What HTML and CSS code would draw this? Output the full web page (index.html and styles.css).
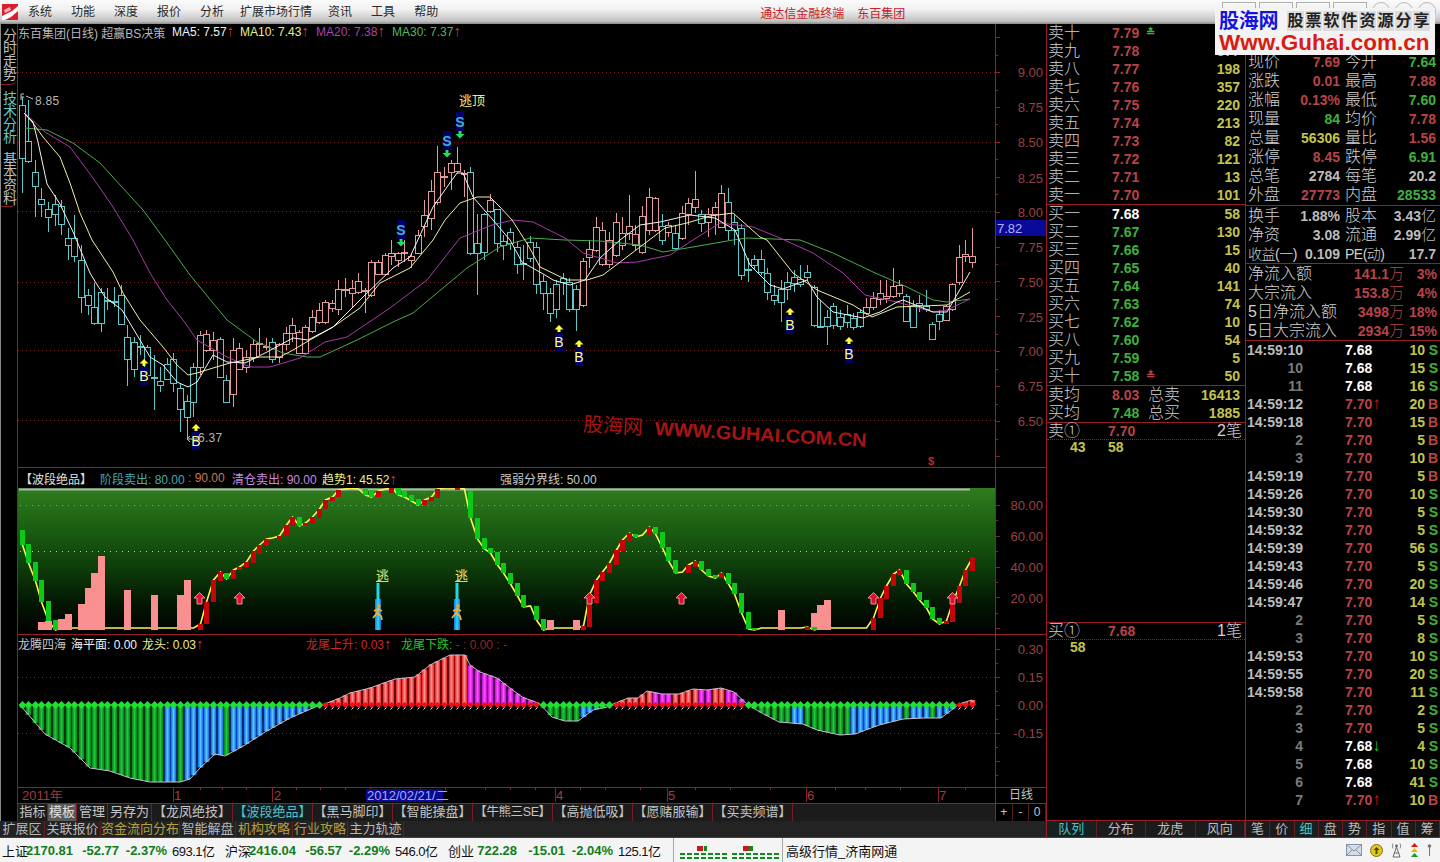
FILE: index.html
```html
<!DOCTYPE html>
<html lang="zh">
<head>
<meta charset="utf-8">
<title>通达信金融终端 东百集团</title>
<link rel="stylesheet" href="styles.css">
</head>
<body>
<div class="app">
  <header class="menubar">
    <svg class="logo" viewBox="0 0 16 16" width="16" height="16"><rect width="16" height="16" fill="#d8202c"/><path d="M0 12 L10 7 L16 2 L16 7 L9 13 L3 16 L0 16Z" fill="#fff"/><path d="M2 6 L8 3 L9 6 L3 9Z" fill="#f4b0b0"/></svg>
    <nav class="menu">
      <span>系统</span><span>功能</span><span>深度</span><span>报价</span><span>分析</span><span class="wide">扩展市场行情</span><span>资讯</span><span>工具</span><span>帮助</span>
    </nav>
    <div class="menu-title"><span>通达信金融终端</span><span>东百集团</span></div>
    <div class="winbtns"><i></i><i></i><i></i><i></i><b></b><b></b><b></b></div>
  </header>

  <main class="body">
    <section class="left">
      <div class="left-top">
        <aside class="side">
          <div class="side-tab h1">分时走势</div>
          <div class="side-tab h2 on">技术分析</div>
          <div class="side-tab h3">基本资料</div>
        </aside>
        <div class="charts">
          <div class="panel p-main">
            <div class="plot">
              <div class="head h-main">
                <span class="name">东百集团(日线) 超赢BS决策</span>
                <span class="ma w68 c-white">MA5: 7.57<em>↑</em></span>
                <span class="ma w76 c-yellow">MA10: 7.43<em>↑</em></span>
                <span class="ma w76 c-mag">MA20: 7.38<em>↑</em></span>
                <span class="ma c-green">MA30: 7.37<em>↑</em></span>
              </div>
              <svg id="mainChart" class="svg" width="977" height="427" viewBox="18 40 977 427"></svg>
            </div>
            <svg id="axisMain" class="svg" width="51" height="443" viewBox="995 24 51 443"></svg>
          </div>
          <div class="panel p-ind">
            <div class="plot">
              <div class="head h-ind">
                <span class="i-name">【波段绝品】</span>
                <span class="i1 c-teal">阶段卖出: 80.00</span>
                <span class="i2 c-org">: 90.00</span>
                <span class="i3 c-lil">清仓卖出: 90.00</span>
                <span class="i4 c-yellow">趋势1: 45.52<em>↑</em></span>
                <span class="i5 c-gray">强弱分界线: 50.00</span>
              </div>
              <svg id="indChart" class="svg" width="977" height="146" viewBox="18 488 977 146"></svg>
            </div>
            <svg id="axisInd" class="svg" width="51" height="166" viewBox="995 468 51 166"></svg>
          </div>
          <div class="panel p-drg">
            <div class="plot">
              <div class="head h-drg">
                <span class="d1 c-gray">龙腾四海</span>
                <span class="d2 c-white">海平面: 0.00</span>
                <span class="d3 c-yellow">龙头: 0.03<em>↑</em></span>
                <span class="d4 c-red">龙尾上升: 0.03<em>↑</em></span>
                <span class="d5 c-lime">龙尾下跌: <u>- : 0.00 : -</u></span>
              </div>
              <svg id="drgChart" class="svg" width="977" height="136" viewBox="18 651 977 136"></svg>
            </div>
            <svg id="axisDrg" class="svg" width="51" height="152" viewBox="995 635 51 152"></svg>
          </div>
          <div class="xaxis">
            <svg id="xAxis" class="svg" width="977" height="15" viewBox="18 788 977 15"></svg>
            <div class="period">日线</div>
          </div>
          <div class="tpl-row">
            <span>指标</span><span class="sel">模板</span><span>管理</span><span>另存为</span>
            <span>【龙凤绝技】</span><span class="active">【波段绝品】</span><span>【黑马脚印】</span><span>【智能操盘】</span><span class="narrow">【牛熊三SE】</span><span>【高抛低吸】</span><span>【愿赌服输】</span><span>【买卖频谱】</span>
            <div class="zoom"><b>+</b><b>-</b><b>0</b></div>
          </div>
        </div>
      </div>
      <div class="ext-row">
        <span>扩展区</span><span>关联报价</span><span class="y">资金流向分布</span><span>智能解盘</span><span class="y">机构攻略</span><span class="y">行业攻略</span><span>主力轨迹</span>
      </div>
    </section>

    <section class="quote">
      <div class="book">
        <div class="bk"><span class="l">卖十</span><b class="r">7.79</b><i class="g">≛</i><b class="y"></b></div>
        <div class="bk"><span class="l">卖九</span><b class="r">7.78</b><i></i><b class="y">377</b></div>
        <div class="bk"><span class="l">卖八</span><b class="r">7.77</b><i></i><b class="y">198</b></div>
        <div class="bk"><span class="l">卖七</span><b class="r">7.76</b><i></i><b class="y">357</b></div>
        <div class="bk"><span class="l">卖六</span><b class="r">7.75</b><i></i><b class="y">220</b></div>
        <div class="bk"><span class="l">卖五</span><b class="r">7.74</b><i></i><b class="y">213</b></div>
        <div class="bk"><span class="l">卖四</span><b class="r">7.73</b><i></i><b class="y">82</b></div>
        <div class="bk"><span class="l">卖三</span><b class="r">7.72</b><i></i><b class="y">121</b></div>
        <div class="bk"><span class="l">卖二</span><b class="r">7.71</b><i></i><b class="y">13</b></div>
        <div class="bk"><span class="l">卖一</span><b class="r">7.70</b><i></i><b class="y">101</b></div>
        <div class="rule"></div>
        <div class="bk"><span class="l">买一</span><b class="w">7.68</b><i></i><b class="y">58</b></div>
        <div class="bk"><span class="l">买二</span><b class="g">7.67</b><i></i><b class="y">130</b></div>
        <div class="bk"><span class="l">买三</span><b class="g">7.66</b><i></i><b class="y">15</b></div>
        <div class="bk"><span class="l">买四</span><b class="g">7.65</b><i></i><b class="y">40</b></div>
        <div class="bk"><span class="l">买五</span><b class="g">7.64</b><i></i><b class="y">141</b></div>
        <div class="bk"><span class="l">买六</span><b class="g">7.63</b><i></i><b class="y">74</b></div>
        <div class="bk"><span class="l">买七</span><b class="g">7.62</b><i></i><b class="y">10</b></div>
        <div class="bk"><span class="l">买八</span><b class="g">7.60</b><i></i><b class="y">54</b></div>
        <div class="bk"><span class="l">买九</span><b class="g">7.59</b><i></i><b class="y">5</b></div>
        <div class="bk"><span class="l">买十</span><b class="g">7.58</b><i class="r">≛</i><b class="y">50</b></div>
        <div class="rule"></div>
        <div class="avg"><span class="l">卖均</span><b class="r">8.03</b><span class="l">总卖</span><b class="y">16413</b></div>
        <div class="avg"><span class="l">买均</span><b class="g">7.48</b><span class="l">总买</span><b class="y">1885</b></div>
        <div class="rule"></div>
        <div class="q-head"><span class="l">卖①</span><b class="r">7.70</b><span class="l n">2笔</span></div>
        <div class="q-list"><b class="y">43</b><b class="y">58</b></div>
        <div class="rule gap"></div>
        <div class="q-head"><span class="l">买①</span><b class="r">7.68</b><span class="l n">1笔</span></div>
        <div class="q-list"><b class="y">58</b></div>
        <div class="tabs t-book"><span class="on">队列</span><span>分布</span><span>龙虎</span><span>风向</span></div>
      </div>
      <div class="info">
        <div class="stats s1">
          <div class="st"><span class="l">现价</span><b class="r">7.69</b><span class="l">今开</span><b class="g">7.64</b></div>
          <div class="st"><span class="l">涨跌</span><b class="r">0.01</b><span class="l">最高</span><b class="r">7.88</b></div>
          <div class="st"><span class="l">涨幅</span><b class="r">0.13%</b><span class="l">最低</span><b class="g">7.60</b></div>
          <div class="st"><span class="l">现量</span><b class="g">84</b><span class="l">均价</span><b class="r">7.78</b></div>
          <div class="st"><span class="l">总量</span><b class="y">56306</b><span class="l">量比</span><b class="r">1.56</b></div>
          <div class="st"><span class="l">涨停</span><b class="r">8.45</b><span class="l">跌停</span><b class="g">6.91</b></div>
          <div class="st"><span class="l">总笔</span><b class="s">2784</b><span class="l">每笔</span><b class="s">20.2</b></div>
          <div class="st"><span class="l">外盘</span><b class="r">27773</b><span class="l">内盘</span><b class="g">28533</b></div>
        </div>
        <div class="rule"></div>
        <div class="stats s2">
          <div class="st"><span class="l">换手</span><b class="s">1.88%</b><span class="l">股本</span><b class="s">3.43<span class="cj">亿</span></b></div>
          <div class="st"><span class="l">净资</span><b class="s">3.08</b><span class="l">流通</span><b class="s">2.99<span class="cj">亿</span></b></div>
          <div class="st"><span class="l tight">收益(一)</span><b class="s">0.109</b><span class="l tight">PE(动)</span><b class="s">17.7</b></div>
        </div>
        <div class="rule"></div>
        <div class="flows">
          <div class="fl"><span class="l">净流入额</span><b class="r">141.1<span class="cj">万</span></b><b class="r">3%</b></div>
          <div class="fl"><span class="l">大宗流入</span><b class="r">153.8<span class="cj">万</span></b><b class="r">4%</b></div>
          <div class="fl"><span class="l">5日净流入额</span><b class="r">3498<span class="cj">万</span></b><b class="r">18%</b></div>
          <div class="fl"><span class="l">5日大宗流入</span><b class="r">2934<span class="cj">万</span></b><b class="r">15%</b></div>
        </div>
        <div class="rule"></div>
        <div class="ticks">
          <div class="tk"><b class="s">14:59:10</b><b class="w">7.68</b><b class="y">10</b><b class="g">S</b></div>
          <div class="tk"><b class="d">10</b><b class="w">7.68</b><b class="y">15</b><b class="g">S</b></div>
          <div class="tk"><b class="d">11</b><b class="w">7.68</b><b class="y">16</b><b class="g">S</b></div>
          <div class="tk"><b class="s">14:59:12</b><b class="r">7.70<i class="up">↑</i></b><b class="y">20</b><b class="r">B</b></div>
          <div class="tk"><b class="s">14:59:18</b><b class="r">7.70</b><b class="y">15</b><b class="r">B</b></div>
          <div class="tk"><b class="d">2</b><b class="r">7.70</b><b class="y">5</b><b class="r">B</b></div>
          <div class="tk"><b class="d">3</b><b class="r">7.70</b><b class="y">10</b><b class="r">B</b></div>
          <div class="tk"><b class="s">14:59:19</b><b class="r">7.70</b><b class="y">5</b><b class="r">B</b></div>
          <div class="tk"><b class="s">14:59:26</b><b class="r">7.70</b><b class="y">10</b><b class="g">S</b></div>
          <div class="tk"><b class="s">14:59:30</b><b class="r">7.70</b><b class="y">5</b><b class="g">S</b></div>
          <div class="tk"><b class="s">14:59:32</b><b class="r">7.70</b><b class="y">5</b><b class="g">S</b></div>
          <div class="tk"><b class="s">14:59:39</b><b class="r">7.70</b><b class="y">56</b><b class="g">S</b></div>
          <div class="tk"><b class="s">14:59:43</b><b class="r">7.70</b><b class="y">5</b><b class="g">S</b></div>
          <div class="tk"><b class="s">14:59:46</b><b class="r">7.70</b><b class="y">20</b><b class="g">S</b></div>
          <div class="tk"><b class="s">14:59:47</b><b class="r">7.70</b><b class="y">14</b><b class="g">S</b></div>
          <div class="tk"><b class="d">2</b><b class="r">7.70</b><b class="y">5</b><b class="g">S</b></div>
          <div class="tk"><b class="d">3</b><b class="r">7.70</b><b class="y">8</b><b class="g">S</b></div>
          <div class="tk"><b class="s">14:59:53</b><b class="r">7.70</b><b class="y">10</b><b class="g">S</b></div>
          <div class="tk"><b class="s">14:59:55</b><b class="r">7.70</b><b class="y">20</b><b class="g">S</b></div>
          <div class="tk"><b class="s">14:59:58</b><b class="r">7.70</b><b class="y">11</b><b class="g">S</b></div>
          <div class="tk"><b class="d">2</b><b class="r">7.70</b><b class="y">2</b><b class="g">S</b></div>
          <div class="tk"><b class="d">3</b><b class="r">7.70</b><b class="y">5</b><b class="g">S</b></div>
          <div class="tk"><b class="d">4</b><b class="w">7.68<i class="dn">↓</i></b><b class="y">4</b><b class="g">S</b></div>
          <div class="tk"><b class="d">5</b><b class="w">7.68</b><b class="y">10</b><b class="g">S</b></div>
          <div class="tk"><b class="d">6</b><b class="w">7.68</b><b class="y">41</b><b class="g">S</b></div>
          <div class="tk"><b class="d">7</b><b class="r">7.70<i class="up">↑</i></b><b class="y">10</b><b class="r">B</b></div>
        </div>
        <div class="tabs t-info"><span>笔</span><span>价</span><span class="on">细</span><span>盘</span><span>势</span><span>指</span><span>值</span><span>筹</span></div>
      </div>
    </section>
  </main>

  <footer class="status">
    <div class="idx"><span>上证</span><b>2170.81</b><b>-52.77</b><b>-2.37%</b><span class="amt">693.1亿</span></div>
    <div class="idx"><span>沪深</span><b>2416.04</b><b>-56.57</b><b>-2.29%</b><span class="amt">546.0亿</span></div>
    <div class="idx"><span>创业</span><b>722.28</b><b>-15.01</b><b>-2.04%</b><span class="amt">125.1亿</span></div>
    <div class="mini">
      <svg width="104" height="22" viewBox="0 0 104 22"><g fill="#0e8a1e"><path d="M2 13h5v2H2zM9 13h5v2H9zM16 13h5v2h-5zM23 13h5v2h-5zM30 13h5v2h-5zM37 13h5v2h-5zM44 13h5v2h-5zM54 13h5v2h-5zM61 13h5v2h-5zM68 13h5v2h-5zM75 13h5v2h-5zM82 13h5v2h-5zM89 13h5v2h-5zM96 13h5v2h-5zM2 17h5v2H2zM9 17h5v2H9zM16 17h5v2h-5zM23 17h5v2h-5zM30 17h5v2h-5zM37 17h5v2h-5zM44 17h5v2h-5zM54 17h5v2h-5zM61 17h5v2h-5zM68 17h5v2h-5zM75 17h5v2h-5zM82 17h5v2h-5zM89 17h5v2h-5zM96 17h5v2h-5zM26 6h3v5h-3zM70 6h5v5h-5z"/></g><g fill="#c81818"><path d="M19 6h6v5h-6zM72 6h-7v5h5z"/></g></svg>
    </div>
    <div class="feed">高级行情_济南网通</div>
    <div class="tray">
      <svg width="16" height="12" viewBox="0 0 16 12"><rect x=".5" y=".5" width="15" height="11" fill="#d4dce8" stroke="#8494a8"/><path d="M1 1l7 6 7-6M1 11l5-5M15 11l-5-5" fill="none" stroke="#8494a8"/></svg>
      <svg width="13" height="13" viewBox="0 0 13 13"><circle cx="6.5" cy="6.5" r="6" fill="#e0c820" stroke="#807010"/><path d="M6.5 3l3 3h-2v4h-2V6h-2z" fill="#504808"/></svg>
      <svg width="11" height="16" viewBox="0 0 11 16"><path d="M5.5 5L2 15M5.5 5l3.500 10M3 11h5M2 15h7" stroke="#666" fill="none"/><circle cx="5.5" cy="4" r="1.400" fill="#666"/><path d="M2 1.500a5 5 0 0 0 0 5M9 1.500a5 5 0 0 1 0 5" stroke="#888" fill="none"/></svg>
      <svg width="9" height="15" viewBox="0 0 9 15"><path d="M4.500 0L8 4H1z" fill="#e01010"/><path d="M4.500 5L8 9H1z" fill="#e0c000"/><path d="M4.500 10L8 14H1z" fill="#10a010"/></svg>
      <svg width="5" height="13" viewBox="0 0 5 13"><circle cx="2.500" cy="2" r="1.800" fill="#777"/><path d="M2.500 3v9" stroke="#777"/></svg>
    </div>
  </footer>

  <aside class="ad">
    <div class="ad-top"><strong>股海网</strong><div class="ad-cells"><span>股</span><span>票</span><span>软</span><span>件</span><span>资</span><span>源</span><span>分</span><span>享</span></div></div>
    <div class="ad-url">Www.Guhai.com.cn</div>
  </aside>
</div>
<script src="script.js"></script>
</body>
</html>
```

FILE: styles.css
```css
* { box-sizing: border-box; }
html, body { margin: 0; padding: 0; background: #000; }
body { font-family: "Liberation Sans", "Noto Sans CJK SC", sans-serif; overflow: hidden; }
.app { position: relative; width: 1440px; height: 862px; display: flex; flex-direction: column; background: #000; }
.svg { display: block; flex: none; }
em { font-style: normal; color: #c83a3a; font-size: 15px; line-height: 12px; }

/* menu */
.menubar { height: 24px; flex: none; display: flex; align-items: center; background: linear-gradient(#fbfbfb, #f0f0f0 40%, #c2c2c2 88%, #8a8a8a); position: relative; }
.logo { margin-left: 2px; }
.menu { display: flex; gap: 19px; margin-left: 10px; font-size: 12px; color: #2a2a2a; line-height: 22px; }
.menu .wide { margin: 0 -3px; }
.menu-title { display: flex; gap: 13px; margin-left: 322px; font-size: 12px; color: #c82028; }
.winbtns { position: absolute; left: 1222px; top: 2px; display: flex; gap: 3px; }
.winbtns i { width: 34px; height: 14px; border: 1px solid #b0b0b0; }
.winbtns b { width: 18px; height: 18px; border: 1px solid #b8b8b8; border-radius: 50%; margin-left: 2px; }

/* layout */
.body { flex: none; height: 814px; display: flex; }
.left { width: 1046px; flex: none; display: flex; flex-direction: column; }
.left-top { display: flex; height: 797px; }
.side { width: 18px; flex: none; border-left: 1px solid #8a8a8a; border-right: 1px solid #8e1c24; }
.side-tab { width: 16px; writing-mode: vertical-rl; font-size: 14px; line-height: 16px; letter-spacing: -1px; color: #bdbdbd; display: flex; align-items: center; justify-content: center; border-bottom: 1px solid #8e1c24; border-radius: 0 0 6px 0; }
.side-tab.h1 { height: 61px; margin-bottom: 4px; }
.side-tab.h2 { height: 57px; color: #62c8c8; margin-bottom: 3px; border-bottom-color: transparent; }
.side-tab.h3 { height: 58px; }
.charts { width: 1028px; flex: none; display: flex; flex-direction: column; }
.panel { display: flex; border-bottom: 1px solid #9a1c26; flex: none; }
.p-main { height: 444px; }
.p-ind { height: 167px; }
.p-drg { height: 153px; }
.plot { width: 977px; flex: none; display: flex; flex-direction: column; }

/* chart heads */
.head { display: flex; font-size: 12px; white-space: nowrap; align-items: center; }
.h-main { height: 16px; padding-left: 0; }
.h-ind { height: 20px; padding-left: 2px; }
.h-drg { height: 16px; }
.name { width: 154px; color: #b8b8b8; }
.ma.w68 { width: 68px; }
.ma.w76 { width: 76px; }
.c-white { color: #f2f2f2; }
.c-yellow { color: #eeee88; }
.c-mag { color: #b040b0; }
.c-green { color: #50b860; }
.c-teal { color: #48a8b0; }
.c-org { color: #c87858; }
.c-lil { color: #c888e0; }
.c-gray { color: #c8c8c8; }
.c-red { color: #c82828; }
.c-lime { color: #28c828; }
.c-lime u { text-decoration: none; color: #902828; }
.i-name { width: 80px; color: #e0e0e0; }
.i1 { width: 88px; }
.i2 { width: 44px; }
.i3 { width: 90px; }
.i4 { width: 178px; }
.d1 { width: 53px; }
.d2 { width: 71px; }
.d3 { width: 164px; }
.d4 { width: 95px; }

/* x axis + template tabs */
.xaxis { display: flex; height: 16px; flex: none; border-bottom: 1px solid #9a1c26; }
.period { width: 51px; color: #c4c4c4; font-size: 12px; text-align: center; line-height: 15px; border-left: 1px solid #9a1c26; }
.tpl-row { height: 17px; flex: none; display: grid; grid-template-columns: 30px 29px 31px 44px 81px 80px 80px 80px 80px 80px 80px 80px 202px 51px; background: #1b1b1b; font-size: 13px; line-height: 16px; color: #c4c4c4; }
.tpl-row > span { text-align: center; border-right: 1px solid #7a1c22; white-space: nowrap; }
.tpl-row .sel { background: #5a5a5a; color: #e0e0e0; }
.tpl-row .active { color: #52c0c8; background: #141f22; }
.tpl-row .narrow { letter-spacing: -.4px; font-size: 12.5px; }
.zoom { grid-column: 14; display: grid; grid-template-columns: repeat(3, 1fr); background: #000; font-size: 12px; border-left: 1px solid #9a1c26; }
.zoom b { font-weight: 400; text-align: center; border-right: 1px solid #5a1c1c; }
.ext-row { height: 17px; flex: none; display: grid; grid-template-columns: 45px 56px 79px 56px 57px 55px 56px 1fr; grid-auto-flow: column; background: #232323; font-size: 13px; line-height: 16px; color: #b8b8b8; border-bottom: 1px solid #8e1c24; }
.ext-row span { text-align: center; border-right: 1px solid #6a1c20; white-space: nowrap; }
.ext-row .y { color: #b4a040; }

/* quote panel */
.quote { width: 394px; flex: none; display: flex; border-bottom: 1px solid #8e1c24; }
.book { width: 200px; border-left: 1px solid #9a1c26; border-right: 1px solid #9a1c26; display: flex; flex-direction: column; flex: none; height: 813px; }
.info { width: 194px; flex: none; display: flex; flex-direction: column; height: 813px; }
.l { font-size: 16px; font-weight: 300; color: #d0d0d0; white-space: nowrap; line-height: 18px; }
.l.tight { font-size: 14px; letter-spacing: -.5px; }
.book b, .info b { font-size: 14px; font-weight: 700; line-height: 18px; white-space: nowrap; }
.r { color: #b8434a; }
.g { color: #3eb13e; }
.y { color: #c4c44c; }
.w { color: #fff; }
.s { color: #bcbcbc; }
.d { color: #7c7c7c; }
i { font-style: normal; }
.cj { font-weight: 300; font-size: 15px; }
.bk { height: 18px; display: grid; grid-template-columns: 64px 34px 18px 1fr; padding: 0 5px 0 1px; }
.bk > b:last-child, .avg > b:last-child { text-align: right; }
.bk > i { font-size: 11px; line-height: 17px; font-weight: 700; }
.rule { height: 1px; flex: none; background: #9a1c26; }
.rule.gap { margin-top: 166px; }
.avg { height: 18px; display: grid; grid-template-columns: 64px 36px 36px 1fr; padding: 0 5px 0 1px; }
.q-head { height: 17px; display: grid; grid-template-columns: 60px 1fr auto; padding: 0 3px 0 1px; border-bottom: 1px dotted #703030; }
.q-head .l, .q-head b { line-height: 16px; }
.q-list { height: 16px; display: grid; grid-template-columns: 38px 38px; padding-left: 23px; }
.q-list b { line-height: 15px; }
.tabs { margin-top: auto; height: 17px; flex: none; display: grid; background: #1b1b1b; font-size: 13px; line-height: 16px; color: #bcbcbc; text-align: center; border-top: 1px solid #9a1c26; }
.tabs span { border-right: 1px solid #6a1c20; }
.tabs .on { color: #50c0c0; background: #142022; }
.t-book { grid-template-columns: repeat(4, 1fr); }
.t-info { grid-template-columns: repeat(8, 1fr); }
.stats.s1 { padding-top: 29px; display: grid; grid-auto-rows: 18.9px; height: 181px; }
.stats.s2 { display: grid; grid-auto-rows: 19px; height: 57px; }
.st { display: grid; grid-template-columns: 34px 58px 38px 58px; padding-left: 2px; align-items: center; }
.st b { text-align: right; }
.st .l { padding-left: 5px; }
.st .l:first-child { padding-left: 0; }
.flows { display: grid; grid-auto-rows: 19px; height: 76px; }
.fl { display: grid; grid-template-columns: 100px 56px 33px; padding-left: 2px; align-items: center; }
.fl b { text-align: right; }
.ticks { display: grid; grid-auto-rows: 18px; }
.tk { display: grid; grid-template-columns: 57px 90px 32px 13px; }
.tk > b:nth-child(1) { text-align: right; }
.tk > b:nth-child(2) { padding-left: 42px; }
.tk > b:nth-child(3) { text-align: right; }
.tk > b:nth-child(4) { text-align: right; }
.up, .dn { font-size: 17px; line-height: 12px; }
.up { color: #e01010; }
.dn { color: #20c030; }

/* status bar */
.status { height: 24px; flex: none; display: flex; align-items: center; background: #f4f4f4; padding-left: 2px; font-size: 13px; color: #111; }
.idx { display: grid; grid-template-columns: 24px 45px 48px 48px 58px; flex: none; width: 223px; align-items: center; white-space: nowrap; }
.idx b { color: #0f7d20; text-align: right; font-size: 13px; }
.idx .amt { padding-left: 5px; font-size: 13px; letter-spacing: -.5px; }
.mini { margin-left: 2px; height: 24px; width: 110px; border-left: 1px solid #a8a8a8; border-right: 1px solid #a8a8a8; padding: 2px 0 0 4px; flex: none; }
.feed { padding-left: 3px; font-size: 13px; white-space: nowrap; }
.tray { margin-left: auto; display: flex; align-items: center; gap: 8px; padding-right: 8px; }

/* overlay ad */
.ad { position: absolute; left: 1215px; top: 8px; width: 220px; height: 47px; background: #f3f3f3; padding: 1px 4px; }
.ad-top { display: flex; align-items: center; height: 23px; }
.ad-top strong { font-size: 20px; line-height: 22px; color: #1414e0; width: 68px; letter-spacing: -.3px; }
.ad-cells { display: flex; }
.ad-cells span { width: 18px; height: 20px; text-align: center; font-size: 16px; line-height: 20px; color: #222; font-weight: 700; background: #dcdcdc; border-right: 1px solid #f3f3f3; }
.ad-url { font-size: 22.5px; line-height: 21px; font-weight: 700; color: #d81c10; white-space: nowrap; }

/* svg text */
.t-axis { font: 13px "Liberation Sans", sans-serif; fill: #9a4242; text-anchor: end; }
.t-x { font: 13px "Liberation Sans", sans-serif; fill: #a03c3c; }
.t-date { font: 13px "Liberation Sans", "Noto Sans CJK SC", sans-serif; fill: #a8a8ff; }
.t-val { font: 12px "Liberation Sans", sans-serif; fill: #b8b8b8; letter-spacing: .3px; }
.t-escape { font: 13px "Noto Sans CJK SC", sans-serif; fill: #ecec80; }
.t-s { font: 700 14px "Liberation Sans", sans-serif; fill: #3cb4c8; text-anchor: middle; }
.t-b { font: 14px "Liberation Sans", sans-serif; fill: #ffff80; text-anchor: middle; }
.t-mark { font: 700 11px "Liberation Sans", sans-serif; fill: #c02828; text-anchor: middle; }
.wm-cn { font: 20px "Noto Sans CJK SC", sans-serif; fill: #a81414; }
.wm-en { font: 700 19px "Liberation Sans", sans-serif; fill: #a81414; }
```

FILE: script.js
```js
// Chart data: every value is read off the screen in page pixels.
var X = function (i) { return Math.round(21.5 + 6.6 * i) + 0.5; };
var candles = ("g105,158,97,193 g141,161,100,163 g172,186,160,217 g199,204,188,217 g209,217,202,232 g204,214,195,226 g206,224,200,235 g238,245,228,260 g238,256,215,262 g260,297,245,313 " +
"g295,305,289,315 g307,323,283,325 g292,323,288,332 g300,301,288,310 g301,302,287,307 g295,324,285,325 g337,359,325,386 g342,369,337,377 g346,347,335,355 g347,375,345,378 " +
"g377,378,355,410 g381,385,367,392 g364,379,358,380 g359,383,353,392 g388,409,383,432 g401,417,395,440 g367,402,363,417 r335,367,331,375 r334,350,330,352 r340,350,332,360 " +
"g339,377,337,378 g380,402,375,403 r350,394,338,407 r348,369,343,370 r357,367,350,373 r344,357,340,362 r343,344,328,355 r346,347,338,350 g342,359,338,363 r344,357,343,363 " +
"r333,344,327,350 r325,333,318,342 r332,353,330,354 r327,353,325,354 r317,331,310,333 r310,322,303,324 r302,322,300,324 r303,308,300,312 r289,309,280,315 r289,290,278,297 " +
"r288,293,280,308 r281,292,273,294 r290,291,288,313 r262,295,260,297 r262,274,260,275 r255,274,253,275 r253,256,240,265 r253,260,252,267 r252,253,240,262 r256,260,253,268 " +
"r235,253,230,254 r215,226,200,237 r191,218,180,230 r172,202,146,205 r176,177,167,187 r163,172,160,190 r163,171,147,173 r173,174,170,197 g172,253,167,255 g243,253,214,295 " +
"g214,252,213,260 r200,211,194,213 g209,243,209,252 g241,245,235,260 g232,243,228,250 " +
"g247,264,241,274 g263,264,245,280 g242,258,236,262 g247,284,242,294 g281,293,275,310 g293,313,288,322 g284,309,280,318 g278,282,273,295 g282,309,278,312 g289,309,285,331 " +
"r261,305,258,307 r249,257,240,268 r227,250,217,252 r230,264,222,266 r240,264,232,268 r222,255,213,257 r233,245,217,250 r226,233,195,240 r234,245,225,250 r216,252,206,254 " +
"r197,230,188,235 r198,230,197,232 g226,240,214,245 r225,232,222,237 g233,248,225,250 r213,238,206,240 r203,214,198,225 r199,207,171,213 g214,223,210,232 r214,222,208,237 " +
"r207,214,202,235 r193,227,185,228 g202,230,188,240 g222,230,215,245 g228,275,224,280 g269,270,258,282 g259,265,255,270 g259,272,250,275 g273,292,268,300 g295,300,285,305 " +
"g289,302,280,322 g282,289,272,300 g277,283,270,292 g279,284,265,287 g272,277,265,280 g287,325,285,327 g326,327,300,328 g317,326,310,345 g306,325,303,329 g317,326,310,330 " +
"g314,322,305,328 g318,327,313,330 g312,326,310,328 r307,313,298,315 r298,307,292,310 r293,299,280,305 r296,298,280,303 r286,296,268,298 r285,293,280,297 g296,321,294,322 " +
"g305,327,300,328 g303,305,295,312 g306,309,290,312 g324,339,322,340 g314,321,310,330 r306,320,305,321 r284,309,283,311 r257,282,245,285 r254,256,240,262 r256,262,228,268").split(" ");

var lines = {
  "#f4f4f4": "24,113 33,122 38,142 47,184 60,204 74,234 90,273 96,283 105,297 122,310 140,340 150,357 163,365 177,382 188,387 197,382 213,355 227,362 245,363 267,352 293,338 308,340 333,327 363,297 393,268 410,257 433,207 447,187 457,173 463,173 473,197 493,220 510,240 522,262 545,275 553,280 570,285 585,280 600,258 620,240 640,225 660,222 690,215 715,218 735,230 750,265 770,285 783,289 807,280 817,297 833,312 863,318 880,312 897,302 903,300 933,312 947,312 970,272",
  "#f0f0a0": "24,113 33,123 43,137 60,157 70,183 80,213 92,240 113,272 123,293 140,320 163,347 177,365 188,375 197,373 213,368 230,363 260,357 280,357 293,350 310,340 333,327 360,308 380,283 410,268 433,240 445,220 460,203 477,197 490,197 500,207 512,220 528,245 540,267 567,280 587,280 603,275 640,247 665,228 687,223 710,216 733,213 760,237 767,240 793,273 817,290 853,305 872,317 897,307 947,305 970,292",
  "#a83aa8": "25,113 45,132 70,147 93,178 113,207 133,240 150,273 167,300 183,320 197,340 227,357 250,367 270,367 300,358 325,342 347,337 390,308 427,280 460,238 492,225 513,220 533,222 565,238 583,253 617,263 637,262 670,255 693,240 720,223 753,227 780,238 813,253 843,273 865,295 897,302 933,312 947,310 970,299",
  "#4aac4a": "25,128 47,130 73,143 100,163 143,210 165,240 190,275 227,320 257,342 283,353 307,357 320,357 357,340 393,322 413,313 467,268 500,247 530,238 565,240 600,241 640,245 663,252 687,248 733,240 747,238 800,240 833,253 873,272 907,287 933,300 947,302 970,299"
};

function svgLine(x1, y1, x2, y2, c, extra) {
  return '<line x1="' + x1 + '" y1="' + y1 + '" x2="' + x2 + '" y2="' + y2 + '" stroke="' + c + '"' + (extra || "") + "/>";
}

function drawMain() {
  var s = "";
  [72, 142, 211, 282, 350, 420].forEach(function (y) {
    s += svgLine(18, y + .5, 995, y + .5, "#7c2424", ' stroke-dasharray="1 3"');
  });
  s += '<g shape-rendering="crispEdges">';
  candles.forEach(function (d, i) {
    var up = d[0] === "r", v = d.slice(1).split(",").map(Number), c = up ? "#e39a9a" : "#5cc8c8", x = X(i);
    s += svgLine(x, v[2], x, v[3], c);
    s += '<rect x="' + (x - 3) + '" y="' + (v[0] + .5) + '" width="6" height="' + Math.max(v[1] - v[0], 1) + '" fill="#000" stroke="' + c + '"/>';
  });
  s += "</g>";
  Object.keys(lines).reverse().forEach(function (c) {
    s += '<polyline fill="none" stroke="' + c + '" points="' + lines[c] + '"/>';
  });
  [[401, 220], [447, 131], [460, 112]].forEach(function (m) {
    s += '<rect x="' + (m[0] - 4) + '" y="' + m[1] + '" width="8" height="19" fill="#00006c"/>';
    s += '<text class="t-s" x="' + m[0] + '" y="' + (m[1] + 15) + '">S</text>';
    s += '<path d="M' + (m[0] - 1.5) + " " + (m[1] + 19) + "h3v3h3l-4.500 4.500-4.500-4.500h3z" + '" fill="#20e060"/>';
  });
  [[144, 367], [196, 432], [559, 333], [579, 348], [790, 316], [849, 345]].forEach(function (m) {
    s += '<rect x="' + (m[0] - 4) + '" y="' + m[1] + '" width="8" height="18" fill="#00006c"/>';
    s += '<text class="t-b" x="' + m[0] + '" y="' + (m[1] + 14) + '">B</text>';
    s += '<path d="M' + m[0] + " " + (m[1] - 8) + "l4.500 4.500h-3v2.500h-3v-2.500h-3z" + '" fill="#ffff40"/>';
  });
  s += '<text class="t-escape" x="459" y="105">逃顶</text>';
  s += '<text class="t-val" x="35" y="105">8.85</text>' + '<path d="M21 100v-6h3M21 97h3M26 96l7 3" fill="none" stroke="#c0c0c0"/>';
  s += '<text class="t-val" x="198" y="442">6.37</text>' + '<path d="M197 439h-10M190 436l-3 3 3 3" fill="none" stroke="#c0c0c0"/>';
  s += '<text class="t-mark" x="931" y="465">$</text>';
  s += '<g transform="rotate(3.200 583 425)"><text class="wm-cn" x="583" y="431">股海网</text><text class="wm-en" x="655" y="431" textLength="212" lengthAdjust="spacingAndGlyphs">WWW.GUHAI.COM.CN</text></g>';
  s += '<path d="M969 28l4.500 4-4.500 4-4.500-4z" fill="none" stroke="#681616"/><rect x="982.500" y="27.500" width="9" height="9" fill="none" stroke="#781818"/><path d="M987 28v9" stroke="#781818"/>';
  document.getElementById("mainChart").innerHTML = s;
}

function drawAxis(id, x0, labels, y0, y1, step) {
  var s = svgLine(995.5, y0, 995.5, y1, "#9a1c26");
  for (var y = step.from; y < y1; y += step.by) {
    s += svgLine(996, Math.round(y) + .5, 996 + (step.major && Math.round((y - step.from) / step.by) % 2 === 0 ? 4 : 2), Math.round(y) + .5, "#8a2028");
  }
  labels.forEach(function (l) {
    s += '<text class="t-axis" x="1043" y="' + (l[1] + 5) + '">' + l[0] + "</text>";
  });
  document.getElementById(id).innerHTML = s;
}

var trend = ("g530,545 g544,563 g562,581 g580,602 g601,621 g620,630 f628 f628 f628 f628 f628 f628 f628 f628 f628 f628 f628 f628 f628 f628 f628 f628 f628 f628 f628 f628 f628 " +
"r624,630 r602,624 r580,602 r572,581 g573,579 r570,579 r567,570 r562,567 r551,563 r545,554 r539,546 f538 r536,540 r525,536 r517,526 g517,526 r523,525 r517,524 r509,518 r500,509 r497,501 r490,497 " +
"f489 f488 f489 g489,495 g490,497 r491,497 f489 r488,493 g488,495 g491,497 g495,501 g499,505 r500,505 r497,501 r489,498 f488 f488 r488,490 f489 " +
"g491,518 g518,539 g538,549 g548,553 g552,565 g563,573 g573,584 g583,596 g595,607 f606 g606,620 g619,630 f628 f628 f628 f628 f628 r626,630 r595,627 r580,603 r572,581 r563,573 r550,565 r540,551 r533,541 g534,537 f535 " +
"r527,536 g527,534 g532,548 g547,561 g560,573 f572 r565,573 r561,567 g561,570 g569,576 g575,578 r573,578 g573,584 g583,594 g593,613 g612,629 g628,630 f628 f628 f628 f628 f628 f628 f628 r627,630 g627,630 " +
"f628 f628 f628 f628 f628 f628 f628 f628 r618,630 r598,618 r586,599 r574,586 r570,575 g570,584 g583,592 g592,600 g600,608 g607,619 g618,624 r621,624 r603,622 r586,603 r570,586 r558,571").split(" ");
var pink = [[3,622],[4,621],[6,619],[7,614],[9,604],[10,588],[11,573],[12,556],[16,590],[20,595],[24,595],[25,580],[80,620],[84,620],[115,610],[120,613],[121,605],[122,600]];

function arrowUp(x) {
  return '<path d="M' + x + ' 592.500l5.500 5.500h-3v6h-5v-6h-3z" fill="#e01030" stroke="#f09090"/>';
}
function runner(x) {
  return '<rect x="' + (x - 1.5) + '" y="583" width="3" height="16" fill="#20d8e8"/>' +
    '<rect x="' + (x - 3) + '" y="599" width="6" height="31" fill="url(#cy)"/>' +
    '<circle cx="' + (x + 1) + '" cy="606" r="1.800" fill="#f0a030"/>' +
    '<path d="M' + (x + 1) + " 608l-2 5 4 3 1 4M" + (x - 1) + " 613l-4 5M" + (x - 4) + " 611l4-2 4 2" + '" fill="none" stroke="#f0b040" stroke-width="1.800"/>';
}

function drawInd() {
  var s = '<defs><linearGradient id="bg" x1="0" y1="0" x2="0" y2="1"><stop offset="0" stop-color="#2f7c1e"/><stop offset=".3" stop-color="#1a5c12"/><stop offset=".55" stop-color="#0d3c09"/><stop offset=".8" stop-color="#031503"/><stop offset="1" stop-color="#000"/></linearGradient>' +
    '<linearGradient id="cy" x1="0" y1="0" x2="1" y2="0"><stop offset="0" stop-color="#0878d8"/><stop offset=".5" stop-color="#30d8ff"/><stop offset="1" stop-color="#0878d8"/></linearGradient></defs>';
  s += '<rect x="18" y="488" width="977" height="146" fill="url(#bg)"/>';
  s += svgLine(19, 489.5, 970, 489.5, "#b4b4b4", ' stroke-width="2"');
  s += svgLine(20, 505.5, 970, 505.5, "#7cae6c", ' stroke-dasharray="1 5"');
  s += svgLine(20, 551.5, 970, 551.5, "#b0d0a0", ' stroke-dasharray="1 5"');
  var pts = trend.map(function (d, i) {
    var v = d.slice(1).split(",").map(Number), y = d[0] === "f" ? v[0] : d[0] === "r" ? v[0] : v[1];
    return X(i) + "," + y;
  }).join(" ");
  s += '<polyline fill="none" stroke="#f8f850" stroke-width="1.600" points="' + pts + '"/>';
  pink.forEach(function (p) {
    s += '<rect x="' + (X(p[0]) - 3.5) + '" y="' + p[1] + '" width="7" height="' + (630 - p[1]) + '" fill="#f89090"/>';
  });
  trend.forEach(function (d, i) {
    if (d[0] === "f") return;
    var v = d.slice(1).split(",").map(Number);
    s += '<rect x="' + (X(i) - 2.5) + '" y="' + v[0] + '" width="5" height="' + (v[1] - v[0]) + '" fill="' + (d[0] === "r" ? "#c40408" : "#0cc818") + '"/>';
  });
  [199, 239, 589, 681, 873, 952].forEach(function (x) { s += arrowUp(x + .5); });
  [[378, 376], [457, 455]].forEach(function (p) {
    s += runner(p[0]);
    s += '<text class="t-escape" x="' + p[1] + '" y="580">逃</text>' + svgLine(p[1], 581.5, p[1] + 12, 581.5, "#d8d870");
  });
  document.getElementById("indChart").innerHTML = s;
}

var envelope = [[20,705],[45,734],[70,748],[90,768],[110,771],[130,778],[150,782],[180,782],[190,779],[200,768],[215,754],[225,756],[245,745],[265,732],[290,718],[315,707],[322,705],
  [340,698],[350,693],[370,688],[395,679],[415,677],[430,665],[450,655],[465,655],[470,665],[480,672],[497,678],[510,688],[522,697],[538,703],[541,705],
  [552,717],[565,721],[578,721],[593,710],[607,707],[611,705],[628,698],[638,698],[647,691],[662,694],[679,694],[693,689],[707,690],[721,688],[734,692],[748,705],
  [762,713],[779,722],[803,724],[817,730],[840,735],[855,734],[879,725],[903,719],[924,718],[941,718],[958,705],[962,703],[972,700]];
function envAt(x) {
  for (var k = 1; k < envelope.length; k++) {
    if (x <= envelope[k][0]) {
      var a = envelope[k - 1], b = envelope[k];
      return a[1] + (b[1] - a[1]) * (x - a[0]) / (b[0] - a[0]);
    }
  }
  return 700;
}
function inList(i, list) { return list.some(function (r) { return i >= r[0] && i <= r[1]; }); }
var blue = [[22,23],[25,30],[32,44],[85,87],[117,118],[126,133],[135,137],[139,141]];
var magenta = [[68,78],[96,98],[103,104],[107,109]];

function gradient(id, edge, mid) {
  return '<linearGradient id="' + id + '" x1="0" y1="0" x2="1" y2="0"><stop offset="0" stop-color="' + edge + '"/><stop offset=".5" stop-color="' + mid + '"/><stop offset="1" stop-color="' + edge + '"/></linearGradient>';
}
function drawDragon() {
  var s = "<defs>" + gradient("bG", "#006f14", "#1fc83a") + gradient("bB", "#0058e8", "#5cc4ff") + gradient("bR", "#e00c0c", "#ff9090") + gradient("bM", "#b000c0", "#ff50ff") + "</defs>";
  [677, 733].forEach(function (y) { s += svgLine(18, y + .5, 995, y + .5, "#7c2424", ' stroke-dasharray="1 3"'); });
  var top = "";
  for (var i = 0; i < 145; i++) {
    var x = X(i), y = envAt(x), neg = y > 705, zero = 705;
    var fill = neg ? (inList(i, blue) ? "bB" : "bG") : (inList(i, magenta) ? "bM" : "bR");
    s += '<rect x="' + (x - 3) + '" y="' + Math.min(y, zero) + '" width="6" height="' + Math.abs(y - zero) + '" fill="url(#' + fill + ')"/>';
    top += neg
      ? '<path d="M' + x + " " + (zero - 4) + "l4 4-4 4-4-4z" + '" fill="#20e030"/>'
      : '<path d="M' + x + " " + (zero - 3) + "l3.500 3-3.500 3-3.500-3z" + '" fill="#f01010"/>' + svgLine(x - 1, 709.5, x + 1, 707.5, "#e8e8e8");
  }
  s += '<polyline fill="none" stroke="#c8c0d0" points="' + envelope.map(function (p) { return p.join(","); }).join(" ") + '"/>';
  s += top;
  document.getElementById("drgChart").innerHTML = s;
}

function drawX() {
  var s = "";
  [173, 272, 370, 555, 667, 806, 938].forEach(function (x) { s += svgLine(x + .5, 788, x + .5, 802, "#8a2028"); });
  [200, 222, 246, 296, 320, 345, 395, 420, 445, 485, 510, 535, 580, 605, 640, 695, 730, 770, 835, 865, 900, 965].forEach(function (x) { s += svgLine(x + .5, 788, x + .5, 790, "#8a2028"); });
  [["2011年", 22], ["1", 174], ["2", 274], ["4", 556], ["5", 668], ["6", 807], ["7", 939]].forEach(function (l) {
    s += '<text class="t-x" x="' + l[1] + '" y="800">' + l[0] + "</text>";
  });
  s += '<rect x="366" y="789" width="77" height="13" fill="#0a0a90"/><text class="t-date" x="367" y="800">2012/02/21/二</text>';
  document.getElementById("xAxis").innerHTML = s;
}

drawMain();
drawAxis("axisMain", 0, [["9.00",72],["8.75",107],["8.50",142],["8.25",178],["8.00",212],["7.75",247],["7.50",282],["7.25",317],["7.00",351],["6.75",386],["6.50",421]], 24, 467, { from: 37.200, by: 17.450, major: true });
document.getElementById("axisMain").insertAdjacentHTML("beforeend", '<rect x="996" y="220" width="50" height="16" fill="#0a0a98"/><text x="997" y="233" font-family="Liberation Sans" font-size="13" fill="#b0b0ff">7.82</text>');
drawInd();
drawAxis("axisInd", 0, [["80.00",505],["60.00",536],["40.00",567],["20.00",598]], 468, 634, { from: 505, by: 15.400, major: true });
drawDragon();
drawAxis("axisDrg", 0, [["0.30",649],["0.15",677],["0.00",705],["-0.15",733]], 635, 787, { from: 649, by: 14, major: true });
drawX();
```
